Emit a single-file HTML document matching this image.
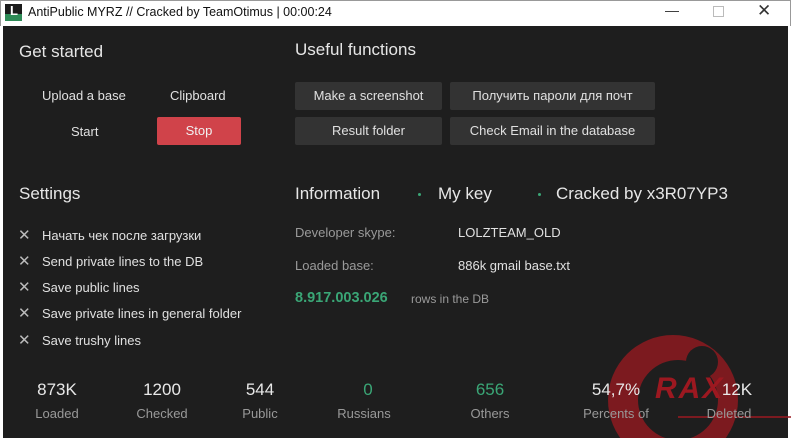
<!DOCTYPE html><html><head><meta charset="utf-8"><style>
*{margin:0;padding:0;box-sizing:border-box}
html,body{width:791px;height:440px;overflow:hidden}
body{background:#fff;font-family:"Liberation Sans","Noto Sans CJK SC",sans-serif;position:relative}
.t{position:absolute;white-space:nowrap}
#tb{position:absolute;left:0;top:0;width:791px;height:26px;background:#fff;border:1px solid #999;border-bottom:none}
#main{position:absolute;left:3px;top:26px;width:785px;height:412px;background:#1e1e1e}
.h{color:#e6e6e6;font-size:17px}
.w{color:#e0e0e0;font-size:13px}
.g{color:#9a9a9a;font-size:13px}
.btn{position:absolute;background:#333;color:#e0e0e0;font-size:13px;text-align:center;line-height:28px;border-radius:2px}
.x{color:#bbb;font-size:15px}
.n{color:#e8e8e8;font-size:17px;text-align:center;width:80px}
.l{color:#999;font-size:13px;text-align:center;width:80px}
.dot{position:absolute;width:3px;height:3px;border-radius:50%;background:#3aa676}
</style></head><body>
<div id="tb"></div>
<div class="t" style="left:5px;top:4px;width:17px;height:17px;background:#1b1b1b"></div>
<div class="t" style="left:5px;top:14px;width:17px;height:7px;background:#2e8b57"></div>
<div class="t" style="left:10px;top:3px;color:#fff;font-size:13px;font-weight:bold">L</div>
<div class="t" style="left:28px;top:5px;font-size:12.5px;color:#111">AntiPublic MYRZ // Cracked by TeamOtimus | 00:00:24</div>
<div class="t" style="left:665px;top:2px;font-size:14px;color:#333">—</div>
<div class="t" style="left:713px;top:6px;width:11px;height:11px;border:1px solid #bbb"></div>
<div class="t" style="left:757px;top:1px;font-size:17px;color:#333">✕</div>
<div id="main"></div>
<svg class="t" style="left:560px;top:320px;display:block" width="231" height="118">
<circle cx="113" cy="80" r="65" fill="#7c1a1f"/>
<circle cx="118" cy="80" r="40" fill="#1e1e1e"/>
<circle cx="142" cy="42" r="16" fill="#1e1e1e"/>
<text x="95" y="78" fill="#9c1820" font-size="30" font-weight="bold" font-style="italic" font-family="Liberation Sans" letter-spacing="2">RAX</text>
<line x1="118" y1="97" x2="231" y2="97" stroke="#9c1820" stroke-width="1.5"/>
</svg>
<div class="t h" style="left:19px;top:42px">Get started</div>
<div class="t h" style="left:295px;top:40px">Useful functions</div>
<div class="t w" style="left:42px;top:88px">Upload a base</div>
<div class="t w" style="left:170px;top:88px">Clipboard</div>
<div class="t w" style="left:71px;top:124px">Start</div>
<div class="btn" style="left:157px;top:117px;width:84px;background:#d0434a;color:#f0f0f0">Stop</div>
<div class="btn" style="left:295px;top:82px;width:147px">Make a screenshot</div>
<div class="btn" style="left:450px;top:82px;width:205px">Получить пароли для почт</div>
<div class="btn" style="left:295px;top:117px;width:147px">Result folder</div>
<div class="btn" style="left:450px;top:117px;width:205px">Check Email in the database</div>
<div class="t h" style="left:19px;top:184px">Settings</div>
<div class="t h" style="left:295px;top:184px">Information</div>
<div class="dot" style="left:418px;top:193px"></div>
<div class="t h" style="left:438px;top:184px">My key</div>
<div class="dot" style="left:538px;top:193px"></div>
<div class="t h" style="left:556px;top:184px">Cracked by x3R07YP3</div>
<div class="t x" style="left:18px;top:226px">✕</div><div class="t w" style="left:42px;top:228px">Начать чек после загрузки</div>
<div class="t x" style="left:18px;top:252px">✕</div><div class="t w" style="left:42px;top:254px">Send private lines to the DB</div>
<div class="t x" style="left:18px;top:278px">✕</div><div class="t w" style="left:42px;top:280px">Save public lines</div>
<div class="t x" style="left:18px;top:304px">✕</div><div class="t w" style="left:42px;top:306px">Save private lines in general folder</div>
<div class="t x" style="left:18px;top:331px">✕</div><div class="t w" style="left:42px;top:333px">Save trushy lines</div>
<div class="t g" style="left:295px;top:225px">Developer skype:</div>
<div class="t w" style="left:458px;top:225px">LOLZTEAM_OLD</div>
<div class="t g" style="left:295px;top:258px">Loaded base:</div>
<div class="t w" style="left:458px;top:258px">886k gmail base.txt</div>
<div class="t" style="left:295px;top:290px;color:#3aa676;font-size:14.5px;font-weight:bold">8.917.003.026</div>
<div class="t g" style="left:411px;top:292px;font-size:12px">rows in the DB</div>
<div class="t n" style="left:17px;top:380px">873K</div><div class="t l" style="left:17px;top:406px">Loaded</div>
<div class="t n" style="left:122px;top:380px">1200</div><div class="t l" style="left:122px;top:406px">Checked</div>
<div class="t n" style="left:220px;top:380px">544</div><div class="t l" style="left:220px;top:406px">Public</div>
<div class="t n" style="left:328px;top:380px;color:#3aa676">0</div><div class="t l" style="left:324px;top:406px">Russians</div>
<div class="t n" style="left:450px;top:380px;color:#3aa676">656</div><div class="t l" style="left:450px;top:406px">Others</div>
<div class="t n" style="left:576px;top:380px">54,7%</div><div class="t l" style="left:576px;top:406px">Percents of</div>
<div class="t n" style="left:697px;top:380px">12K</div><div class="t l" style="left:689px;top:406px">Deleted</div>
</body></html>
